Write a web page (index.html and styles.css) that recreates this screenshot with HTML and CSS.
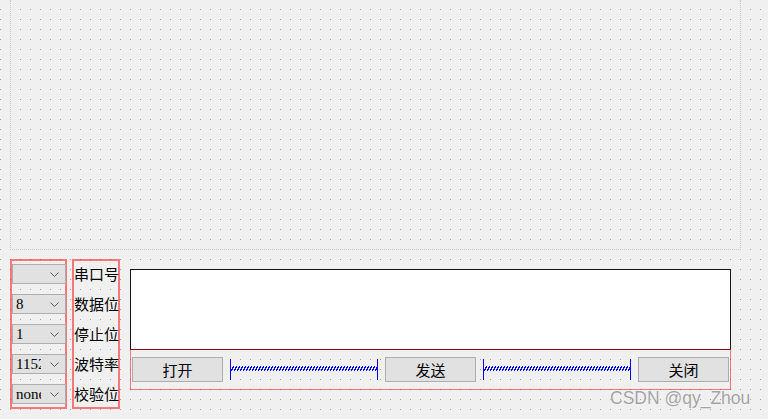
FILE: index.html
```html
<!DOCTYPE html>
<html>
<head>
<meta charset="utf-8">
<link rel="stylesheet" href="styles.css">
</head>
<body>
<div class="frame"></div>
<div class="row">
  <div class="layout vlayout combos">
    <div class="combo"><span class="ctext"></span><svg class="chev" width="9" height="5" viewBox="0 0 9 5"><polyline points="0.5,0.5 4.5,4.5 8.5,0.5" fill="none" stroke="#5a5a5a" stroke-width="1"/></svg></div>
    <div class="combo"><span class="ctext">8</span><svg class="chev" width="9" height="5" viewBox="0 0 9 5"><polyline points="0.5,0.5 4.5,4.5 8.5,0.5" fill="none" stroke="#5a5a5a" stroke-width="1"/></svg></div>
    <div class="combo"><span class="ctext">1</span><svg class="chev" width="9" height="5" viewBox="0 0 9 5"><polyline points="0.5,0.5 4.5,4.5 8.5,0.5" fill="none" stroke="#5a5a5a" stroke-width="1"/></svg></div>
    <div class="combo"><span class="ctext">115200</span><svg class="chev" width="9" height="5" viewBox="0 0 9 5"><polyline points="0.5,0.5 4.5,4.5 8.5,0.5" fill="none" stroke="#5a5a5a" stroke-width="1"/></svg></div>
    <div class="combo"><span class="ctext">none</span><svg class="chev" width="9" height="5" viewBox="0 0 9 5"><polyline points="0.5,0.5 4.5,4.5 8.5,0.5" fill="none" stroke="#5a5a5a" stroke-width="1"/></svg></div>
  </div>
  <div class="layout vlayout labels">
    <div class="lbl">串口号</div>
    <div class="lbl">数据位</div>
    <div class="lbl">停止位</div>
    <div class="lbl">波特率</div>
    <div class="lbl">校验位</div>
  </div>
  <div class="right">
    <div class="textedit"></div>
    <div class="layout hbar">
      <div class="btn">打开</div>
      <svg class="spacer" width="148" height="21" viewBox="0 0 148 21" shape-rendering="crispEdges">
        <defs>
          <pattern id="zz1" x="1" y="7" width="3" height="5" patternUnits="userSpaceOnUse">
            <rect x="2" y="0" width="1" height="1" fill="#0000ff"/>
            <rect x="1" y="1" width="2" height="1" fill="#0000ff"/>
            <rect x="1" y="2" width="1" height="1" fill="#0000ff"/>
            <rect x="0" y="3" width="2" height="1" fill="#0000ff"/>
            <rect x="0" y="4" width="1" height="1" fill="#0000ff"/>
          </pattern>
        </defs>
        <rect x="1" y="7" width="146" height="5" fill="url(#zz1)"/>
        <rect x="0" y="0" width="1" height="21" fill="#0000ff"/>
        <rect x="147" y="0" width="1" height="21" fill="#0000ff"/>
      </svg>
      <div class="btn">发送</div>
      <svg class="spacer" width="148" height="21" viewBox="0 0 148 21" shape-rendering="crispEdges">
        <rect x="1" y="7" width="146" height="5" fill="url(#zz1)"/>
        <rect x="0" y="0" width="1" height="21" fill="#0000ff"/>
        <rect x="147" y="0" width="1" height="21" fill="#0000ff"/>
      </svg>
      <div class="btn">关闭</div>
    </div>
  </div>
</div>
<div class="watermark">CSDN @qy_Zhou</div>
</body>
</html>
```
FILE: styles.css
```css
html, body {
  margin: 0;
  padding: 0;
}
body {
  width: 768px;
  height: 419px;
  overflow: hidden;
  position: relative;
  background-color: #f0f0f0;
  background-image:
    linear-gradient(90deg, #f0f0f0 9px, transparent 9px),
    linear-gradient(180deg, transparent 9px, #9c9c9c 9px);
  background-size: 10px 10px, 10px 10px;
  background-position: 1px 0, 1px 0;
  font-family: "Noto Sans CJK SC", "Noto Sans", sans-serif;
}
.frame {
  box-sizing: border-box;
  margin-left: 10px;
  width: 731px;
  height: 250px;
  border-left: 1px dotted #c8c8c8;
  border-right: 1px dotted #c8c8c8;
  border-bottom: 1px dotted #c8c8c8;
}
.row {
  display: flex;
  align-items: flex-start;
  margin-top: 9px;
  padding-left: 10px;
}
.layout {
  box-sizing: border-box;
}
.vlayout {
  height: 150px;
  border: 2px solid rgba(255, 0, 0, 0.5);
  display: flex;
  flex-direction: column;
  gap: 10px;
  padding: 3px 0;
}
.combos {
  width: 57px;
}
.labels {
  width: 48px;
  margin-left: 5px;
}
.combo {
  box-sizing: border-box;
  width: 54px;
  height: 20px;
  background: #e1e1e1;
  border: 1px solid #adadad;
  display: flex;
  align-items: center;
  padding-left: 3px;
}
.ctext {
  width: 25px;
  overflow: hidden;
  white-space: nowrap;
  font-family: "Liberation Serif", serif;
  font-size: 15px;
  line-height: 18px;
  color: #000;
}
.chev {
  display: block;
  margin-left: auto;
  margin-right: 6px;
}
.lbl {
  height: 20px;
  line-height: 20px;
  font-size: 15px;
  color: #000;
  white-space: nowrap;
}
.right {
  margin-left: 10px;
  margin-top: 10px;
  width: 601px;
}
.textedit {
  box-sizing: border-box;
  height: 81px;
  background: #fff;
  border: 1px solid #161616;
}
.hbar {
  height: 41px;
  margin-top: -1px;
  border: 1px solid rgba(255, 0, 0, 0.5);
  display: flex;
  align-items: center;
  gap: 7px;
  padding: 0 1px;
}
.btn {
  box-sizing: border-box;
  width: 91px;
  height: 25px;
  background: #e1e1e1;
  border: 1px solid #adadad;
  font-size: 15px;
  line-height: 23px;
  text-align: center;
  color: #000;
}
.spacer {
  display: block;
  flex: none;
}
.watermark {
  position: absolute;
  left: 610px;
  top: 388px;
  font-family: "Liberation Sans", Arial, sans-serif;
  font-size: 17.5px;
  line-height: 20px;
  color: #a3a3a3;
  text-shadow: 0 0 1px #ffffff, 0 0 1px #ffffff;
  white-space: nowrap;
}
```
